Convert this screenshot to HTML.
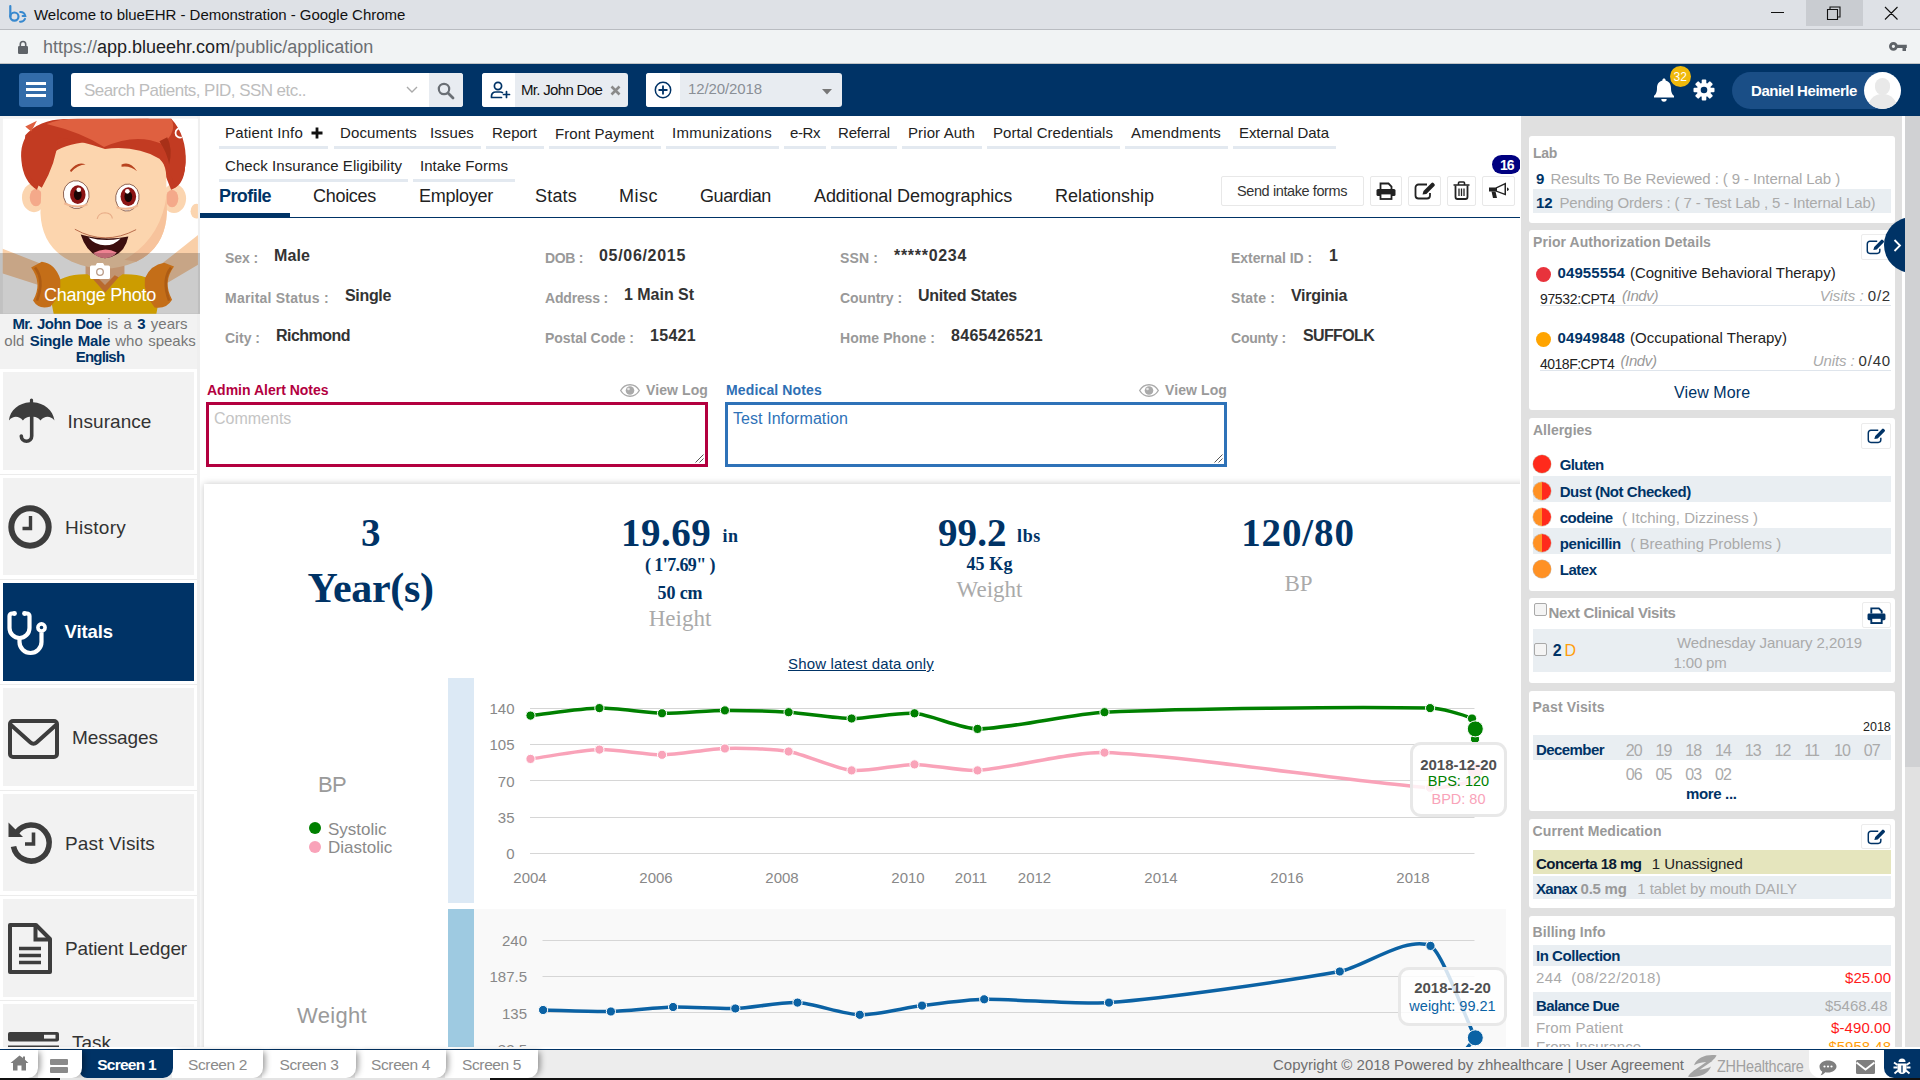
<!DOCTYPE html>
<html lang="en">
<head>
<meta charset="utf-8">
<title>Welcome to blueEHR - Demonstration</title>
<style>
*{box-sizing:border-box;margin:0;padding:0}
html,body{width:1920px;height:1080px;overflow:hidden;background:#fff}
body{font-family:"Liberation Sans",Arial,sans-serif;font-size:15px;color:#222;position:relative}
.a{position:absolute}
.t{position:absolute;white-space:nowrap;line-height:1}
.b{font-weight:700}
.nv{color:#003366}
.g{color:#999}
.lg{color:#aaa}
.sf{font-family:"Liberation Serif","DejaVu Serif",serif}
svg{position:absolute;overflow:visible}
/* chrome */
#titlebar{left:0;top:0;width:1920px;height:30px;background:#dee1e6;border-bottom:1px solid #b9bcc1}
#urlbar{left:0;top:30px;width:1920px;height:34px;background:#f1f3f4;border-bottom:1px solid #c2c4c6}
#nav{left:0;top:64px;width:1920px;height:52px;background:#003366}
.box{position:absolute;top:9px;height:34px;border-radius:3px;background:#fff;overflow:hidden}
/* sidebar */
#side{left:0;top:116px;width:200px;height:934px;background:#fff;overflow:hidden}
.tile{position:absolute;left:3px;width:191px;height:97.700px;background:#f2f2f2}
.tile .t{font-size:19px;color:#333}
.tsep{position:absolute;left:0;width:197px;height:1px;background:#ececec}
/* main */
#main{left:200px;top:116px;width:1321px;height:934px;background:#fff;overflow:hidden}
.mi{position:absolute;height:3px;background:#e3e9f0}
.fl{font-size:14px;font-weight:700;color:#999}
.fv{font-size:16px;font-weight:700;color:#333}
.ib{position:absolute;top:61px;height:30px;border:1px solid #e8e8e8;border-radius:2px;background:#fff}
/* right */
#right{left:1520px;top:116px;width:385px;height:934px;background:#e0e0e0;overflow:hidden}
.card{position:absolute;left:9px;width:366px;background:#fff;border-radius:3px}
.ct{position:absolute;left:4px;font-size:14px;font-weight:700;color:#999;white-space:nowrap;line-height:1}
.row{position:absolute;left:4px;width:358px;background:#e9eef2}
.eb{position:absolute;left:332px;width:30px;height:26px;border:1px solid #ececec;background:#fff;border-radius:2px}
#right .t{margin-top:-1px}
/* footer */
#foot{left:0;top:1049px;width:1920px;height:29px;background:#ededed;border-top:1px solid #003366}
.tab{position:absolute;top:0;height:28px;background:#fff;border-radius:0 0 10px 0;font-size:15.500px;color:#8a8a8a;line-height:29.500px;text-align:center;box-shadow:4px 0 6px -2px rgba(0,0,0,.42)}
</style>
</head>
<body>
<!-- ===== browser chrome ===== -->
<div id="titlebar" class="a">
  <svg style="left:0;top:0" width="30" height="30" viewBox="0 0 30 30"><g fill="none" stroke="#3789cf" stroke-width="2.200" stroke-linecap="round"><path d="M10.300 6v10.600"/><circle cx="14.400" cy="16.600" r="4.100"/><path d="M20.200 12A5 5 0 0 1 25.300 15.900H22.600M25 18.900A5 5 0 0 1 20 21.700" stroke-width="2"/></g></svg>
  <span class="t" style="left:34px;top:7px;font-size:15px;color:#111;letter-spacing:-.04px">Welcome to blueEHR - Demonstration - Google Chrome</span>
  <div class="a" style="left:1806px;top:0;width:57px;height:26px;background:#c9ccd1"></div>
  <svg style="left:1770px;top:0" width="140" height="30" viewBox="0 0 140 30"><path d="M1 12.500h13M57.500 9.500h10v10h-10zM60 9.500v-2.500h10v10h-2.500M115 7l12.500 12.500M127.500 7l-12.500 12.500" fill="none" stroke="#111" stroke-width="1.100"/></svg>
</div>
<div id="urlbar" class="a">
  <svg style="left:17px;top:10px" width="12" height="15" viewBox="0 0 12 15"><rect x="1" y="6" width="10" height="8" rx="1.200" fill="#5f6368"/><path d="M3.300 6V4.200a2.700 2.700 0 0 1 5.400 0V6" fill="none" stroke="#5f6368" stroke-width="1.600"/></svg>
  <span class="t" style="left:43px;top:8px;font-size:18px;color:#6b6f73">https://<span style="color:#202124">app.blueehr.com</span>/public/application</span>
  <svg style="left:1888px;top:10px" width="20" height="12" viewBox="0 0 20 12"><circle cx="5.400" cy="6.300" r="3" fill="none" stroke="#5f6368" stroke-width="2.800"/><path d="M9 4.800h9.800v3.200h-9.800zM14.500 8h3.500v3h-3.500z" fill="#5f6368"/></svg>
</div>
<!-- ===== app nav bar ===== -->
<div id="nav" class="a">
  <div class="box" style="left:19px;width:34px;background:#336ca9">
    <div class="a" style="left:7px;top:9px;width:20px;height:3px;background:#fff"></div>
    <div class="a" style="left:7px;top:15px;width:20px;height:3px;background:#fff"></div>
    <div class="a" style="left:7px;top:21px;width:20px;height:3px;background:#fff"></div>
  </div>
  <div class="box" style="left:71px;width:392px">
    <span class="t" style="left:13px;top:9px;font-size:17px;color:#bdbdbd;letter-spacing:-.55px">Search Patients, PID, SSN etc..</span>
    <svg style="left:335px;top:13px" width="12" height="8" viewBox="0 0 12 8"><path d="M1 1l5 5 5-5" fill="none" stroke="#aaa" stroke-width="1.400"/></svg>
    <div class="a" style="left:358px;top:0;width:34px;height:34px;background:#e8ecf1"></div>
    <svg style="left:366px;top:9px" width="18" height="18" viewBox="0 0 18 18"><circle cx="7" cy="7" r="5.200" fill="none" stroke="#6a6f75" stroke-width="2.200"/><path d="M11 11l5 5" stroke="#6a6f75" stroke-width="2.800" stroke-linecap="round"/></svg>
  </div>
  <div class="box" style="left:482px;width:146px;background:#e8ecf1">
    <div class="a" style="left:0;top:0;width:33px;height:34px;background:#fff"></div>
    <svg style="left:8px;top:8px" width="21" height="18" viewBox="0 0 21 18"><circle cx="8" cy="5" r="3.600" fill="none" stroke="#003366" stroke-width="1.700"/><path d="M1.500 16.500v-1.500a4 4 0 0 1 4-4h5a4 4 0 0 1 2 .6M1.500 16.500h10" fill="none" stroke="#003366" stroke-width="1.700" stroke-linecap="round"/><path d="M16.500 10.500v6M13.500 13.500h6" stroke="#003366" stroke-width="1.700" stroke-linecap="round"/></svg>
    <span class="t" style="left:39px;top:9px;font-size:15px;color:#111;letter-spacing:-.68px">Mr. John Doe</span>
    <svg style="left:128px;top:12px" width="11" height="11" viewBox="0 0 11 11"><path d="M1.500 1.500l8 8M9.500 1.500l-8 8" stroke="#8a8a8a" stroke-width="2.600"/></svg>
  </div>
  <div class="box" style="left:646px;width:196px;background:#e8ecf1">
    <div class="a" style="left:0;top:0;width:34px;height:34px;background:#fff"></div>
    <svg style="left:8px;top:8px" width="18" height="18" viewBox="0 0 18 18"><circle cx="9" cy="9" r="7.700" fill="none" stroke="#003366" stroke-width="1.500"/><path d="M9 4.500v9M4.500 9h9" stroke="#003366" stroke-width="1.800"/></svg>
    <span class="t" style="left:42px;top:8px;font-size:15px;color:#8a8f96;letter-spacing:-.1px">12/20/2018</span>
    <svg style="left:176px;top:16px" width="10" height="6" viewBox="0 0 10 6"><path d="M0 0h10l-5 5.500z" fill="#777"/></svg>
  </div>
  <!-- right side -->
  <svg style="left:1653px;top:13px" width="22" height="26" viewBox="0 0 22 26"><path d="M11 1.500c.9 0 1.600.7 1.600 1.600v.5c3.300.8 5.400 3.600 5.400 7.400 0 4.500 1.300 6.300 3 8v1.500H1V19c1.700-1.700 3-3.500 3-8 0-3.800 2.100-6.600 5.400-7.400v-.5c0-.9.700-1.600 1.600-1.600zM8.300 22h5.400a2.700 2.700 0 0 1-5.400 0z" fill="#fff"/></svg>
  <div class="a" style="left:1670px;top:2px;width:21px;height:21px;border-radius:11px;background:#f0b90b"></div>
  <span class="t" style="left:1673.500px;top:7px;font-size:12px;color:#fff">32</span>
  <svg style="left:1693px;top:15px" width="22" height="22" viewBox="-11 -11 22 22"><g fill="#fff"><circle r="7.200"/><g id="gt"><rect x="-2.300" y="-10.500" width="4.600" height="21" rx="1"/></g><use href="#gt" transform="rotate(45)"/><use href="#gt" transform="rotate(90)"/><use href="#gt" transform="rotate(135)"/></g><circle r="3.300" fill="#003366"/></svg>
  <div class="a" style="left:1732px;top:8px;width:169px;height:37px;border-radius:19px;background:#1a4e86"></div>
  <span class="t b" style="left:1751px;top:19px;font-size:15px;color:#fff;letter-spacing:-.44px">Daniel Heimerle</span>
  <div class="a" style="left:1864px;top:8px;width:37px;height:37px;border-radius:19px;background:#fff;overflow:hidden">
    <div class="a" style="left:11px;top:6px;width:15px;height:17px;border-radius:8px;background:#e9e9e9"></div>
    <div class="a" style="left:4px;top:22px;width:29px;height:24px;border-radius:14px 14px 0 0;background:#e9e9e9"></div>
  </div>
</div>
<!-- ===== left sidebar ===== -->
<div id="side" class="a">
  <div class="a" style="left:0;top:0;width:200px;height:252.700px;background:#f2f2f2"></div>
  <div class="a" style="left:197px;top:0;width:3px;height:934px;background:#efefef"></div>
  <!-- patient photo (cartoon boy) -->
  <svg style="left:0;top:-4px" width="210" height="210" viewBox="0 0 1080 1080">
    <defs><clipPath id="pc"><rect x="14" y="33" width="1004" height="1004"/></clipPath></defs>
    <g clip-path="url(#pc)">
      <rect x="14" y="33" width="1004" height="1004" fill="#fff"/>
      <!-- arms -->
      <path d="M-20 690 L260 800 L230 900 L-20 820z" fill="#f9cfa8"/>
      <path d="M1060 600 L1060 760 L860 880 L820 790z" fill="#f9cfa8"/>
      <ellipse cx="1010" cy="510" rx="30" ry="38" fill="#fbd5b0"/>
      <!-- neck & shirt -->
      <rect x="440" y="730" width="200" height="160" fill="#f2b98e"/>
      <path d="M250 900 Q330 830 450 835 L540 900 L630 835 Q760 830 830 900 L800 1060 L280 1060z" fill="#ffc400"/>
      <path d="M470 850 L540 930 L610 850 L590 840 L540 890 L490 840z" fill="#e8853a"/>
      <!-- cuffs -->
      <path d="M215 770 q70 10 95 90 q10 80 -50 140 q-60 20 -90 -30 q50 -90 -10 -170z" fill="#f58a1f"/>
      <path d="M845 775 q-70 10 -100 80 q-10 80 50 150 q60 10 90 -40 q-50 -90 10 -170z" fill="#f58a1f"/>
      <path d="M180 800 q50 60 10 170" stroke="#d9731a" stroke-width="14" fill="none"/>
      <path d="M880 800 q-50 60 -10 170" stroke="#d9731a" stroke-width="14" fill="none"/>
      <!-- ears -->
      <ellipse cx="175" cy="440" rx="62" ry="75" fill="#fbd5b0"/><ellipse cx="185" cy="440" rx="32" ry="45" fill="#f4a98a"/>
      <ellipse cx="895" cy="445" rx="62" ry="75" fill="#fbd5b0"/><ellipse cx="885" cy="445" rx="32" ry="45" fill="#f4a98a"/>
      <!-- hair back -->
      <path d="M110 250 Q90 60 330 40 L760 33 Q980 80 950 300 Q940 380 880 400 L840 300 L230 300 L190 400 Q120 360 110 250z" fill="#c23b22"/>
      <!-- face -->
      <path d="M215 330 Q215 150 535 150 Q850 150 855 330 L858 520 Q850 700 700 770 Q535 840 370 770 Q215 700 208 520z" fill="#fcd5ae"/>
      <path d="M700 770 Q850 700 858 520 L858 420 Q830 650 640 760z" fill="#f7c39c"/>
      <!-- hair front -->
      <path d="M130 120 Q200 40 330 36 L880 33 Q960 120 955 260 Q950 350 900 390 Q880 300 820 240 Q700 170 540 190 Q420 150 300 130 Q290 260 215 390 Q100 330 130 120z" fill="#c23b22"/>
      <path d="M240 62 Q300 35 400 33 L880 33 Q915 100 835 165 Q700 105 535 180 Q420 105 240 62z" fill="#df6040"/>
      <path d="M130 75 L190 45 L160 100z" fill="#df6040"/>
      <path d="M820 150 q40 60 50 120 q20 -80 -10 -140z" fill="#a83018"/>
      <!-- brows -->
      <path d="M360 300 Q400 250 440 270 Q400 270 365 310z" fill="#b8431f"/>
      <path d="M625 270 Q670 250 705 305 Q670 275 625 282z" fill="#b8431f"/>
      <!-- eyes -->
      <ellipse cx="392" cy="425" rx="66" ry="72" fill="#fff" stroke="#7a4a3a" stroke-width="4" transform="rotate(-12 392 425)"/>
      <ellipse cx="655" cy="440" rx="60" ry="70" fill="#fff" stroke="#7a4a3a" stroke-width="4" transform="rotate(10 655 440)"/>
      <ellipse cx="400" cy="425" rx="40" ry="48" fill="#8c1515"/><ellipse cx="400" cy="425" rx="20" ry="28" fill="#1a0505"/><circle cx="405" cy="400" r="12" fill="#fff"/>
      <ellipse cx="660" cy="435" rx="40" ry="48" fill="#8c1515"/><ellipse cx="660" cy="435" rx="20" ry="28" fill="#1a0505"/><circle cx="655" cy="408" r="12" fill="#fff"/>
      <path d="M330 470 Q400 500 450 475" stroke="#f1b893" stroke-width="10" fill="none"/>
      <path d="M600 490 Q660 510 710 480" stroke="#f1b893" stroke-width="10" fill="none"/>
      <!-- nose, mouth -->
      <path d="M500 550 Q505 520 540 518 Q575 520 578 548" stroke="#e8ad88" stroke-width="6" fill="none"/>
      <path d="M385 603 Q540 690 700 605" stroke="#b86a4a" stroke-width="5" fill="none"/>
      <path d="M415 630 Q540 665 660 640 Q640 740 540 752 Q450 740 415 630z" fill="#3c0f0f"/>
      <path d="M455 645 Q540 668 620 650 Q590 685 540 685 Q490 685 455 645z" fill="#fff"/>
      <path d="M480 725 Q540 690 600 722 Q580 750 540 752 Q500 750 480 725z" fill="#ee8292"/>
      <!-- top-right partial icon -->
      <path d="M935 85 a24 24 0 1 0 0 45" stroke="#fff" stroke-width="9" fill="none"/>
    </g>
  </svg>
  <div class="a" style="left:0;top:137px;width:200px;height:61px;background:rgba(0,0,0,.2)"></div>
  <svg style="left:89px;top:146px" width="22" height="18" viewBox="0 0 22 18"><path d="M2.500 3.500h4l1.500-2.500h6l1.500 2.500h4a1.500 1.500 0 0 1 1.500 1.500v10.500a1.500 1.500 0 0 1-1.500 1.500h-17a1.500 1.500 0 0 1-1.500-1.500v-10.500a1.500 1.500 0 0 1 1.500-1.500z" fill="#fff"/><circle cx="11" cy="10" r="3.300" fill="none" stroke="#b89a86" stroke-width="1.300"/></svg>
  <span class="t" style="left:44px;top:170px;font-size:18px;color:#fff;letter-spacing:-.26px">Change Photo</span>
  <!-- patient summary -->
  <div class="a" style="left:0;top:200px;width:200px;text-align:center;font-size:15px;line-height:16.500px;color:#777;white-space:nowrap;word-spacing:1.2px">
    <div><span class="b nv" style="letter-spacing:-.6px">Mr. John Doe</span> is a <span class="b nv">3</span> years</div>
    <div>old <span class="b nv" style="letter-spacing:-.32px">Single Male</span> who speaks</div>
    <div><span class="b nv" style="letter-spacing:-.8px">English</span></div>
  </div>
  <!-- tiles -->
  <div class="a" style="left:0;top:252.700px;width:197px;height:690px;background:#fff"></div>
  <div class="tile" style="top:256px">
    <svg style="left:5px;top:26px" width="47" height="45" viewBox="0 0 47 45"><path d="M23.500 0.500a1.600 1.600 0 0 1 1.600 1.600v2.100C36 5 45 12 46.500 22.500c-2-2.600-4.500-3.800-7-3.800s-5 1.200-7 3.800c-2-2.600-4.500-3.800-7-3.800V38a7 7 0 0 1-14 0 1.800 1.800 0 0 1 3.600 0 3.400 3.400 0 0 0 6.800 0V18.700c-2.500 0-5 1.200-7 3.800-2-2.600-4.500-3.800-7-3.800s-5 1.200-7 3.800C2 12 11 5 21.900 4.200V2.100A1.600 1.600 0 0 1 23.500 0.500z" fill="#3d3d3d"/></svg>
    <span class="t" style="left:64.500px;top:39.500px;letter-spacing:.06px">Insurance</span>
  </div>
  <div class="tsep" style="top:357.500px"></div>
  <div class="tile" style="top:361.500px">
    <svg style="left:5px;top:27.500px" width="44" height="44" viewBox="0 0 44 44"><circle cx="22" cy="22" r="18.700" fill="none" stroke="#3d3d3d" stroke-width="6"/><path d="M22.500 11v12.500h-8" fill="none" stroke="#3d3d3d" stroke-width="3.400"/></svg>
    <span class="t" style="left:62px;top:40px;letter-spacing:.27px">History</span>
  </div>
  <div class="tsep" style="top:463px"></div>
  <div class="tile" style="top:467px;background:#003366">
    <svg style="left:4px;top:27px" width="42" height="45" viewBox="0 0 42 45"><path d="M7 3.500H5a2.500 2.500 0 0 0-2.500 2.500v12a10 10 0 0 0 20 0V6a2.500 2.500 0 0 0-2.500-2.500h-2" fill="none" stroke="#fff" stroke-width="4.200" stroke-linecap="round"/><path d="M12.500 28v4a11 11 0 0 0 22 0v-9.500" fill="none" stroke="#fff" stroke-width="4.200"/><circle cx="34.500" cy="17.500" r="3.600" fill="none" stroke="#fff" stroke-width="3.600"/><circle cx="7.500" cy="3.500" r="2.400" fill="#fff"/><circle cx="17.500" cy="3.500" r="2.400" fill="#fff"/></svg>
    <span class="t b" style="left:61.500px;top:40px;font-size:18.500px;color:#fff;letter-spacing:-.1px">Vitals</span>
  </div>
  <div class="tsep" style="top:568px"></div>
  <div class="tile" style="top:572px">
    <svg style="left:5px;top:30.500px" width="51" height="40" viewBox="0 0 51 40"><rect x="2" y="2" width="47" height="36" rx="3" fill="none" stroke="#3d3d3d" stroke-width="4"/><path d="M3 6l19.500 17.500a4.500 4.500 0 0 0 6 0L48 6" fill="none" stroke="#3d3d3d" stroke-width="4"/></svg>
    <span class="t" style="left:69px;top:40px;letter-spacing:-.08px">Messages</span>
  </div>
  <div class="tsep" style="top:673.500px"></div>
  <div class="tile" style="top:677.500px">
    <svg style="left:5px;top:26.500px" width="44" height="45" viewBox="0 0 44 45"><path d="M8.500 12.500a18 18 0 1 1-3 14" fill="none" stroke="#3d3d3d" stroke-width="5.600"/><path d="M0.500 2.500v14.500h14.500z" fill="#3d3d3d"/><path d="M25.500 12.500v11.500h-8.500" fill="none" stroke="#3d3d3d" stroke-width="3.600"/></svg>
    <span class="t" style="left:62px;top:40px;letter-spacing:.15px">Past Visits</span>
  </div>
  <div class="tsep" style="top:779px"></div>
  <div class="tile" style="top:783px">
    <svg style="left:5px;top:24px" width="44" height="51" viewBox="0 0 44 51"><path d="M2 2h26l14 14v33H2z" fill="none" stroke="#3d3d3d" stroke-width="4" stroke-linejoin="round"/><path d="M27.500 2.500v14h14" fill="none" stroke="#3d3d3d" stroke-width="4"/><path d="M11 25.500h22M11 32.500h22M11 39.500h22" stroke="#3d3d3d" stroke-width="3.600"/></svg>
    <span class="t" style="left:62px;top:40px;letter-spacing:-.11px">Patient Ledger</span>
  </div>
  <div class="tsep" style="top:884px"></div>
  <div class="tile" style="top:888px">
    <svg style="left:5px;top:28px" width="51" height="30" viewBox="0 0 51 30"><rect x="0" y="0" width="51" height="9.500" rx="2" fill="#3d3d3d"/><rect x="36" y="2.800" width="11.500" height="3.800" fill="#f2f2f2"/><rect x="0" y="13.500" width="51" height="3" fill="#3d3d3d"/></svg>
    <span class="t" style="left:69px;top:28.500px">Task</span>
  </div>
</div>
<!--SIDE-->
<!-- ===== main column ===== -->
<div id="main" class="a">
  <span class="t" style="left:25px;top:8.5px;letter-spacing:0.17px">Patient Info</span><div class="mi" style="left:19px;top:30px;width:109px"></div>
  <span class="t" style="left:140px;top:8.5px;letter-spacing:0.12px">Documents</span><div class="mi" style="left:134px;top:30px;width:90px"></div>
  <span class="t" style="left:230px;top:8.5px;letter-spacing:0.10px">Issues</span><div class="mi" style="left:224px;top:30px;width:57px"></div>
  <span class="t" style="left:292px;top:8.5px;letter-spacing:0.00px">Report</span><div class="mi" style="left:286px;top:30px;width:58px"></div>
  <span class="t" style="left:355px;top:9.5px;letter-spacing:0.05px">Front Payment</span><div class="mi" style="left:349px;top:30px;width:112px"></div>
  <span class="t" style="left:472px;top:8.5px;letter-spacing:0.25px">Immunizations</span><div class="mi" style="left:466px;top:30px;width:113px"></div>
  <span class="t" style="left:590px;top:8.5px;letter-spacing:-0.42px">e-Rx</span><div class="mi" style="left:584px;top:30px;width:42px"></div>
  <span class="t" style="left:638px;top:8.5px;letter-spacing:-0.17px">Referral</span><div class="mi" style="left:631px;top:30px;width:66px"></div>
  <span class="t" style="left:708px;top:8.5px;letter-spacing:0.11px">Prior Auth</span><div class="mi" style="left:702px;top:30px;width:80px"></div>
  <span class="t" style="left:793px;top:8.5px;letter-spacing:0.04px">Portal Credentials</span><div class="mi" style="left:787px;top:30px;width:133px"></div>
  <span class="t" style="left:931px;top:8.5px;letter-spacing:0.16px">Amendments</span><div class="mi" style="left:925px;top:30px;width:103px"></div>
  <span class="t" style="left:1039px;top:8.5px;letter-spacing:-0.07px">External Data</span><div class="mi" style="left:1033px;top:30px;width:103px"></div>
  <svg style="left:111px;top:11px" width="12" height="12" viewBox="0 0 12 12"><path d="M6 0.500v11M0.500 6h11" stroke="#111" stroke-width="2.800"/></svg>
  <span class="t" style="left:25px;top:42px;letter-spacing:0.07px">Check Insurance Eligibility</span><div class="mi" style="left:19px;top:63px;width:189px"></div>
  <span class="t" style="left:220px;top:42px;letter-spacing:0.04px">Intake Forms</span><div class="mi" style="left:213px;top:63px;width:102px"></div>
  <span class="t b nv" style="left:19px;top:71px;font-size:18px;letter-spacing:-0.57px">Profile</span>
  <span class="t" style="left:113px;top:71px;font-size:18px;letter-spacing:-0.29px">Choices</span>
  <span class="t" style="left:219px;top:71px;font-size:18px;letter-spacing:-0.25px">Employer</span>
  <span class="t" style="left:335px;top:71px;font-size:18px;letter-spacing:0.20px">Stats</span>
  <span class="t" style="left:419px;top:71px;font-size:18px;letter-spacing:0.50px">Misc</span>
  <span class="t" style="left:500px;top:71px;font-size:18px;letter-spacing:-0.39px">Guardian</span>
  <span class="t" style="left:614px;top:71px;font-size:18px;letter-spacing:-0.09px">Additional Demographics</span>
  <span class="t" style="left:855px;top:71px;font-size:18px;letter-spacing:-0.01px">Relationship</span>
  <div class="a" style="left:0;top:97px;width:90px;height:5px;background:#003366"></div>
  <div class="a" style="left:0;top:100.500px;width:1321px;height:1.500px;background:#003366"></div>
  <div class="ib" style="left:1021px;top:60px;width:143px;height:30px"></div>
  <span class="t" style="left:1037px;top:68px;font-size:14.500px;color:#333;letter-spacing:-.4px">Send intake forms</span>
  <div class="ib" style="left:1170px;top:60px;width:32px;height:30px"></div>
  <div class="ib" style="left:1208px;top:60px;width:33px;height:30px"></div>
  <div class="ib" style="left:1247px;top:60px;width:29px;height:30px"></div>
  <div class="ib" style="left:1282px;top:60px;width:33px;height:30px"></div>
  <svg style="left:1176px;top:66px" width="20" height="18" viewBox="0 0 20 18"><path d="M4.500 7V1.500h8l3 3V7" fill="none" stroke="#222" stroke-width="1.800"/><rect x="0.500" y="7" width="19" height="7" rx="1.500" fill="#222"/><rect x="4.500" y="11.500" width="11" height="5.500" fill="#fff" stroke="#222" stroke-width="1.800"/></svg>
  <svg style="left:1214px;top:65px" width="22" height="19" viewBox="0 0 22 19"><path d="M13 3.500H4.500a3 3 0 0 0-3 3v8a3 3 0 0 0 3 3h8.500a3 3 0 0 0 3-3V12" fill="none" stroke="#222" stroke-width="1.800"/><path d="M8.500 13.500l1-3.500 8-8a1.400 1.400 0 0 1 2 0l.9.900a1.400 1.400 0 0 1 0 2l-8 8z" fill="#222"/></svg>
  <svg style="left:1253px;top:65px" width="17" height="19" viewBox="0 0 17 19"><path d="M0.500 4h16M5.500 4V2a1 1 0 0 1 1-1h4a1 1 0 0 1 1 1v2" fill="none" stroke="#222" stroke-width="1.600"/><path d="M2.500 4.500v11.500a2 2 0 0 0 2 2h8a2 2 0 0 0 2-2V4.500" fill="none" stroke="#222" stroke-width="1.800"/><path d="M6 7.500v7.500M8.500 7.500v7.500M11 7.500v7.500" stroke="#222" stroke-width="1.300"/></svg>
  <svg style="left:1288px;top:65px" width="22" height="19" viewBox="0 0 22 19"><path d="M1 6.500h6.500L18 1.500v13L7.500 10.500H1z" fill="#222"/><path d="M16.500 3.800L9 7.300v2.400l7.500 2.800z" fill="#fff"/><path d="M3.500 10.500h4l1.500 6.500h-4z" fill="#222"/><path d="M19 6.500a1.700 1.700 0 0 1 0 3.400" fill="#222"/></svg>
  <div class="a" style="left:1292px;top:39px;width:29px;height:19px;border-radius:10px;background:#000080"></div>
  <span class="t b" style="left:1300px;top:41.500px;font-size:14px;color:#fff;letter-spacing:-1px">16</span>
  <span class="t fl" style="left:25px;top:135px;letter-spacing:-0.10px">Sex :</span><span class="t fv" style="left:74px;top:131.5px;letter-spacing:0.10px">Male</span>
  <span class="t fl" style="left:345px;top:135px;letter-spacing:-0.34px">DOB :</span><span class="t fv" style="left:399px;top:131.5px;letter-spacing:0.69px">05/06/2015</span>
  <span class="t fl" style="left:640px;top:135px;letter-spacing:0.14px">SSN :</span><span class="t fv" style="left:694px;top:131.5px;letter-spacing:0.70px">*****0234</span>
  <span class="t fl" style="left:1031px;top:135px;letter-spacing:-0.05px">External ID :</span><span class="t fv" style="left:1129px;top:131.5px;letter-spacing:-0.90px">1</span>
  <span class="t fl" style="left:25px;top:175px;letter-spacing:0.22px">Marital Status :</span><span class="t fv" style="left:145px;top:171.5px;letter-spacing:-0.33px">Single</span>
  <span class="t fl" style="left:345px;top:175px;letter-spacing:-0.18px">Address :</span><span class="t fv" style="left:424px;top:170.5px;letter-spacing:-0.02px">1 Main St</span>
  <span class="t fl" style="left:640px;top:175px;letter-spacing:-0.02px">Country :</span><span class="t fv" style="left:718px;top:171.5px;letter-spacing:-0.25px">United States</span>
  <span class="t fl" style="left:1031px;top:175px;letter-spacing:0.17px">State :</span><span class="t fv" style="left:1091px;top:171.5px;letter-spacing:-0.30px">Virginia</span>
  <span class="t fl" style="left:25px;top:215px;letter-spacing:0.00px">City :</span><span class="t fv" style="left:76px;top:211.5px;letter-spacing:-0.53px">Richmond</span>
  <span class="t fl" style="left:345px;top:215px;letter-spacing:-0.04px">Postal Code :</span><span class="t fv" style="left:450px;top:211.5px;letter-spacing:0.30px">15421</span>
  <span class="t fl" style="left:640px;top:215px;letter-spacing:0.08px">Home Phone :</span><span class="t fv" style="left:751px;top:211.5px;letter-spacing:0.30px">8465426521</span>
  <span class="t fl" style="left:1031px;top:215px;letter-spacing:-0.22px">County :</span><span class="t fv" style="left:1103px;top:211.5px;letter-spacing:-0.64px">SUFFOLK</span>
  <span class="t b" style="left:7px;top:267px;font-size:14px;color:#b3003f">Admin Alert Notes</span>
  <svg style="left:420px;top:268px" width="20" height="13" viewBox="0 0 20 13"><path d="M0.700 6.500C3 2.500 6.500 0.800 10 0.800s7 1.700 9.300 5.700C17 10.500 13.500 12.200 10 12.200S3 10.500 0.700 6.500z" fill="none" stroke="#aaa" stroke-width="1.400"/><circle cx="10" cy="6.500" r="4.300" fill="#aaa"/><circle cx="8.500" cy="5" r="1.300" fill="#e6e6e6"/></svg><span class="t b" style="left:446px;top:267px;font-size:14px;color:#9a9a9a;letter-spacing:.1px">View Log</span>
  <div class="a" style="left:6px;top:286px;width:502px;height:65px;border:3px solid #b3003f;background:#fff"></div>
  <span class="t" style="left:14px;top:295px;font-size:16px;color:#c4c4c4">Comments</span>
  <svg style="left:495px;top:338px" width="9" height="9" viewBox="0 0 9 9"><path d="M0.500 8.500l8-8M4.500 8.500l4-4" stroke="#555" stroke-width="1"/></svg>
  <span class="t b" style="left:526px;top:267px;font-size:14px;color:#2e6fb4;letter-spacing:.14px">Medical Notes</span>
  <svg style="left:939px;top:268px" width="20" height="13" viewBox="0 0 20 13"><path d="M0.700 6.500C3 2.500 6.500 0.800 10 0.800s7 1.700 9.300 5.700C17 10.500 13.500 12.200 10 12.200S3 10.500 0.700 6.500z" fill="none" stroke="#aaa" stroke-width="1.400"/><circle cx="10" cy="6.500" r="4.300" fill="#aaa"/><circle cx="8.500" cy="5" r="1.300" fill="#e6e6e6"/></svg><span class="t b" style="left:965px;top:267px;font-size:14px;color:#9a9a9a;letter-spacing:.1px">View Log</span>
  <div class="a" style="left:525px;top:286px;width:502px;height:65px;border:3px solid #2e72b8;background:#fff"></div>
  <span class="t" style="left:533px;top:295px;font-size:16px;color:#2e72b8;letter-spacing:.07px">Test Information</span>
  <svg style="left:1014px;top:338px" width="9" height="9" viewBox="0 0 9 9"><path d="M0.500 8.500l8-8M4.500 8.500l4-4" stroke="#555" stroke-width="1"/></svg>
  <!-- vitals card -->
  <div class="a" style="left:4px;top:368px;width:1330px;height:600px;background:#fff;box-shadow:0 0 7px rgba(0,0,0,.22)"></div>
  <span class="t sf b nv" style="left:-129.3px;width:600px;text-align:center;top:397px;font-size:39px;letter-spacing:0px">3</span>
  <span class="t sf b nv" style="left:-129.3px;width:600px;text-align:center;top:451px;font-size:42px;letter-spacing:-0.3px">Year(s)</span>
  <span class="t sf b nv" style="left:421px;top:397px;font-size:39px;letter-spacing:.5px">19.69</span><span class="t sf b nv" style="left:522.5px;top:411px;font-size:18px;letter-spacing:.5px">in</span>
  <span class="t sf b nv" style="left:180px;width:600px;text-align:center;top:440px;font-size:18px;letter-spacing:-0.59px">( 1'7.69" )</span>
  <span class="t sf b nv" style="left:180px;width:600px;text-align:center;top:468px;font-size:18px;letter-spacing:-0.1px">50 cm</span>
  <span class="t sf lg" style="left:180px;width:600px;text-align:center;top:491px;font-size:23px;letter-spacing:0px">Height</span>
  <span class="t sf b nv" style="left:738px;top:397px;font-size:39px;letter-spacing:.1px">99.2</span><span class="t sf b nv" style="left:817px;top:411px;font-size:18px;letter-spacing:.66px">lbs</span>
  <span class="t sf b nv" style="left:489.5px;width:600px;text-align:center;top:439px;font-size:18px;letter-spacing:0.1px">45 Kg</span>
  <span class="t sf lg" style="left:489.5px;width:600px;text-align:center;top:462px;font-size:23px;letter-spacing:0px">Weight</span>
  <span class="t sf b nv" style="left:798px;width:600px;text-align:center;top:397px;font-size:39px;letter-spacing:0.9px">120/80</span>
  <span class="t sf lg" style="left:798.5px;width:600px;text-align:center;top:456px;font-size:23px;letter-spacing:0px">BP</span>
  <span class="t nv" style="left:588px;top:540px;font-size:15px;letter-spacing:.16px;text-decoration:underline">Show latest data only</span>
  <span class="t" style="left:118px;top:658px;font-size:22px;color:#9a9a9a;letter-spacing:-.6px">BP</span>
  <div class="a" style="left:109px;top:706px;width:12px;height:12px;border-radius:6px;background:#008000"></div><span class="t" style="left:128px;top:705px;font-size:17px;color:#8a8a8a">Systolic</span>
  <div class="a" style="left:109px;top:725px;width:12px;height:12px;border-radius:6px;background:#f9a3b9"></div><span class="t" style="left:128px;top:722.5px;font-size:17px;color:#8a8a8a">Diastolic</span>
  <span class="t" style="left:97px;top:889px;font-size:22px;color:#9a9a9a;letter-spacing:.3px">Weight</span>
  <div class="a" style="left:248px;top:562px;width:26px;height:225px;background:#dce9f5"></div>
  <div class="a" style="left:248px;top:793px;width:26px;height:140px;background:#9ecae1"></div>
  <div class="a" style="left:274px;top:793px;width:1032px;height:140px;background:#f9f9f9"></div>
  <svg style="left:0;top:0" width="1320" height="934" viewBox="200 116 1320 934" font-family="Liberation Sans, Arial, sans-serif"><g stroke="#d6d6d6" stroke-width="1" fill="none"><path d="M530 708.5H1474.500"/><path d="M530 744.5H1474.500"/><path d="M530 780.5H1474.500"/><path d="M530 817.5H1474.500"/><path d="M530 853.5H1474.500"/><path d="M542.500 940.5H1474.500"/><path d="M542.500 976.5H1474.500"/><path d="M542.500 1012.5H1474.500"/><path d="M542.500 1048.5H1474.500"/></g><g font-size="15" fill="#888" text-anchor="end"><text x="514.500" y="714">140</text><text x="514.500" y="750">105</text><text x="514.500" y="786.5">70</text><text x="514.500" y="823">35</text><text x="514.500" y="859">0</text><text x="527" y="946">240</text><text x="527" y="982">187.5</text><text x="527" y="1018.5">135</text><text x="527" y="1054.500">82.5</text></g><g font-size="15" fill="#888" text-anchor="middle"><text x="530" y="882.500">2004</text><text x="656" y="882.500">2006</text><text x="782" y="882.500">2008</text><text x="908" y="882.500">2010</text><text x="971" y="882.500">2011</text><text x="1034.5" y="882.500">2012</text><text x="1161" y="882.500">2014</text><text x="1287" y="882.500">2016</text><text x="1413" y="882.500">2018</text></g><g transform="translate(.5 0)"><path d="M530.0,758.9C547.2,756.6,581.7,750.1,598.9,749.6C614.5,749.1,645.9,754.9,661.5,754.8C677.2,754.7,708.7,748.9,724.4,748.5C740.3,748.1,772.2,748.7,788.1,751.5C803.9,754.2,835.4,768.8,851.1,770.4C866.8,772.0,898.3,764.4,914.0,764.4C929.8,764.4,961.2,771.4,977.0,770.4C1008.8,768.4,1072.2,751.4,1104.0,752.6C1185.4,755.7,1348.2,781.6,1429.6,787.8C1440.1,788.6,1461.0,784.7,1471.5,780.7C1472.3,780.4,1474.0,773.0,1474.8,770.4" fill="none" stroke="#f9a3b9" stroke-width="3.500"/><path d="M530.0,715.6C547.2,713.7,581.7,708.4,598.9,708.1C614.5,707.8,645.9,713.0,661.5,713.3C677.2,713.6,708.7,710.5,724.4,710.4C740.3,710.3,772.2,711.2,788.1,712.2C803.9,713.2,835.4,718.4,851.1,718.5C866.8,718.6,898.3,712.0,914.0,713.3C929.8,714.6,961.2,729.0,977.0,728.9C1008.8,728.7,1072.2,713.7,1104.0,712.2C1185.4,708.5,1348.2,706.7,1429.6,708.1C1440.1,708.3,1461.0,713.7,1471.5,718.5C1472.3,718.9,1474.0,726.3,1474.8,728.9" fill="none" stroke="#008000" stroke-width="3.500"/><g fill="#f9a3b9" stroke="#fff" stroke-width="1"><circle cx="530" cy="758.9" r="4.600"/><circle cx="598.9" cy="749.6" r="4.600"/><circle cx="661.5" cy="754.8" r="4.600"/><circle cx="724.4" cy="748.5" r="4.600"/><circle cx="788.1" cy="751.5" r="4.600"/><circle cx="851.1" cy="770.4" r="4.600"/><circle cx="914" cy="764.4" r="4.600"/><circle cx="977" cy="770.4" r="4.600"/><circle cx="1104" cy="752.6" r="4.600"/><circle cx="1429.6" cy="787.8" r="4.600"/><circle cx="1471.5" cy="780.7" r="4.600"/><circle cx="1474.8" cy="770.4" r="8"/></g><g fill="#008000" stroke="#fff" stroke-width="1"><circle cx="530" cy="715.6" r="4.600"/><circle cx="598.9" cy="708.1" r="4.600"/><circle cx="661.5" cy="713.3" r="4.600"/><circle cx="724.4" cy="710.4" r="4.600"/><circle cx="788.1" cy="712.2" r="4.600"/><circle cx="851.1" cy="718.5" r="4.600"/><circle cx="914" cy="713.3" r="4.600"/><circle cx="977" cy="728.9" r="4.600"/><circle cx="1104" cy="712.2" r="4.600"/><circle cx="1429.6" cy="708.1" r="4.600"/><circle cx="1471.5" cy="718.5" r="4.600"/><circle cx="1474.500" cy="739" r="4.600"/><circle cx="1474.800" cy="728.900" r="8"/></g><path d="M542.6,1010.0C559.5,1010.4,593.5,1011.9,610.4,1011.5C626.0,1011.1,657.0,1007.4,672.6,1007.0C688.1,1006.6,719.2,1009.0,734.8,1008.5C750.3,1008.0,781.5,1001.8,797.0,1002.6C812.6,1003.4,843.7,1014.4,859.3,1014.8C874.8,1015.2,906.0,1007.5,921.5,1005.6C937.0,1003.7,968.2,999.5,983.7,999.3C1014.9,998.8,1077.3,1005.0,1108.5,1002.6C1166.2,998.1,1281.6,981.7,1339.3,971.5C1362.0,967.5,1407.3,934.8,1430.0,945.9C1441.2,951.4,1463.6,1014.8,1474.8,1037.8" fill="none" stroke="#0b62a4" stroke-width="3.500"/><path d="M1474.600 1037.500Q1471 1043 1466.500 1048" fill="none" stroke="#0b62a4" stroke-width="3.500"/><g fill="#0b62a4" stroke="#fff" stroke-width="1"><circle cx="542.6" cy="1010" r="4.600"/><circle cx="610.4" cy="1011.5" r="4.600"/><circle cx="672.6" cy="1007" r="4.600"/><circle cx="734.8" cy="1008.5" r="4.600"/><circle cx="797" cy="1002.6" r="4.600"/><circle cx="859.3" cy="1014.8" r="4.600"/><circle cx="921.5" cy="1005.6" r="4.600"/><circle cx="983.7" cy="999.3" r="4.600"/><circle cx="1108.5" cy="1002.6" r="4.600"/><circle cx="1339.3" cy="971.5" r="4.600"/><circle cx="1430" cy="945.9" r="4.600"/><circle cx="1474.800" cy="1037.800" r="8"/></g></g></svg>
  <div class="a" style="left:1210px;top:626px;width:97px;height:75px;border:3px solid rgba(228,228,228,.85);border-radius:11px;background:rgba(255,255,255,.82);text-align:center;font-size:14.500px;line-height:17.500px;padding-top:10.500px;white-space:nowrap"><div class="b" style="color:#505050;font-size:15px">2018-12-20</div><div style="color:#008000">BPS: 120</div><div style="color:#f9a3b9">BPD: 80</div></div>
  <div class="a" style="left:1198px;top:850.500px;width:109px;height:59px;border:3px solid rgba(228,228,228,.85);border-radius:11px;background:rgba(255,255,255,.82);text-align:center;font-size:14.500px;line-height:18px;padding-top:9.500px;white-space:nowrap"><div class="b" style="color:#505050;font-size:15px">2018-12-20</div><div style="color:#0b62a4">weight: 99.21</div></div>
<!--MAIN2-->
</div>
<!--MAIN-->
<!-- ===== right column ===== -->
<div class="a" style="left:1902px;top:116px;width:3px;height:934px;background:#fff"></div>
<div class="a" style="left:1905px;top:116px;width:15px;height:934px;background:#e1e1e1"></div>
<div class="a" style="left:1905px;top:116px;width:15px;height:651px;background:#d0d1d3"></div>
<div id="right" class="a" style="width:382px">
  <div class="a" style="left:0;top:0;width:1px;height:934px;background:#fff"></div>
  <div class="card" style="top:20.0px;height:86.8px"></div>
  <span class="t b g" style="left:13.0px;top:30.5px;font-size:14px;letter-spacing:-0.3px">Lab</span>
  <span class="t b nv" style="left:16.0px;top:56.0px;font-size:15px">9</span><span class="t lg" style="left:30.5px;top:56.0px;font-size:15px;letter-spacing:-0.1px">Results To Be Reviewed : ( 9 - Internal Lab )</span>
  <div class="a" style="left:13px;top:73.0px;width:358px;height:24.0px;background:#e9eef2"></div>
  <span class="t b nv" style="left:16.0px;top:80.0px;font-size:15px">12</span><span class="t lg" style="left:39.4px;top:80.0px;font-size:15px;letter-spacing:-0.14px">Pending Orders : ( 7 - Test Lab , 5 - Internal Lab)</span>
  <div class="card" style="top:114.0px;height:179.7px"></div>
  <span class="t b g" style="left:13.0px;top:119.5px;font-size:14px;letter-spacing:0.07px">Prior Authorization Details</span>
  <div class="eb" style="left:341px;top:118px;width:34px;height:26px"></div><svg style="left:346px;top:122px" width="19" height="17" viewBox="0 0 22 19"><path d="M13 3.500H4.500a3 3 0 0 0-3 3v8a3 3 0 0 0 3 3h8.500a3 3 0 0 0 3-3V12" fill="none" stroke="#003366" stroke-width="1.700"/><path d="M8.500 13.500l1-3.500 8-8a1.400 1.400 0 0 1 2 0l.9.900a1.400 1.400 0 0 1 0 2l-8 8z" fill="#003366"/></svg>
  <div class="a" style="left:16px;top:150.5px;width:15px;height:15px;border-radius:8px;background:#e8333c"></div>
  <span class="t b nv" style="left:37.5px;top:150.0px;font-size:15px;letter-spacing:0.1px">04955554</span><span class="t " style="left:110.0px;top:150.0px;font-size:15px;letter-spacing:-0.03px">(Cognitive Behavioral Therapy)</span>
  <span class="t " style="left:20.0px;top:176.5px;font-size:14px;letter-spacing:-0.36px">97532:CPT4</span><span class="t g" style="left:102.0px;top:173.4px;font-size:15px;letter-spacing:-0.39px;font-style:italic">(Indv)</span><span class="t " style="right:11.0px;top:173.4px;font-size:15px;letter-spacing:0.8px;color:#333"><i class="lg" style="letter-spacing:0">Visits : </i>0/2</span>
  <div class="a" style="left:20px;top:189px;width:351px;height:1px;background:#dfe5ec"></div>
  <div class="a" style="left:16px;top:215.5px;width:15px;height:15px;border-radius:8px;background:#ffa400"></div>
  <span class="t b nv" style="left:37.5px;top:215.0px;font-size:15px;letter-spacing:0.1px">04949848</span><span class="t " style="left:110.0px;top:215.0px;font-size:15px;letter-spacing:0.02px">(Occupational Therapy)</span>
  <span class="t " style="left:20.0px;top:241.5px;font-size:14px;letter-spacing:-0.5px">4018F:CPT4</span><span class="t g" style="left:100.5px;top:238.4px;font-size:15px;letter-spacing:-0.39px;font-style:italic">(Indv)</span><span class="t " style="right:11.0px;top:238.4px;font-size:15px;letter-spacing:0.8px;color:#333"><i class="lg" style="letter-spacing:-.1px">Units : </i>0/40</span>
  <div class="a" style="left:20px;top:254px;width:351px;height:1px;background:#dfe5ec"></div>
  <span class="t nv" style="left:154.0px;top:269.500px;font-size:16px;letter-spacing:0.1px">View More</span>
  <div class="card" style="top:302.3px;height:172.700px"></div>
  <span class="t b g" style="left:13.0px;top:307.5px;font-size:14px">Allergies</span>
  <div class="eb" style="left:341px;top:306.5px;width:30px;height:26px"></div><svg style="left:347px;top:311px" width="19" height="17" viewBox="0 0 22 19"><path d="M13 3.500H4.500a3 3 0 0 0-3 3v8a3 3 0 0 0 3 3h8.500a3 3 0 0 0 3-3V12" fill="none" stroke="#003366" stroke-width="1.700"/><path d="M8.500 13.500l1-3.500 8-8a1.400 1.400 0 0 1 2 0l.9.900a1.400 1.400 0 0 1 0 2l-8 8z" fill="#003366"/></svg>
  <div class="a" style="left:13px;top:360.0px;width:358px;height:26.0px;background:#e9eef2"></div>
  <div class="a" style="left:13px;top:412.0px;width:358px;height:26.0px;background:#e9eef2"></div>
  <div class="a" style="left:13px;top:339.2px;width:18px;height:18px;border-radius:9px;background:#ff2a1c;box-shadow:0 0 0 .5px rgba(120,60,0,.35)"></div><span class="t b nv" style="left:39.7px;top:341.5px;font-size:15px;letter-spacing:-0.58px">Gluten</span>
  <div class="a" style="left:13px;top:366.0px;width:18px;height:18px;border-radius:9px;background:linear-gradient(90deg,#ff9124 0,#ff9124 50%,#ff2a1c 50%,#ff2a1c 100%);box-shadow:0 0 0 .5px rgba(120,60,0,.35)"></div><span class="t b nv" style="left:39.7px;top:368.5px;font-size:15px;letter-spacing:-0.45px">Dust (Not Checked)</span>
  <div class="a" style="left:13px;top:392.0px;width:18px;height:18px;border-radius:9px;background:linear-gradient(90deg,#ff9124 0,#ff9124 50%,#ff2a1c 50%,#ff2a1c 100%);box-shadow:0 0 0 .5px rgba(120,60,0,.35)"></div><span class="t b nv" style="left:39.7px;top:394.5px;font-size:15px;letter-spacing:-0.53px">codeine</span><span class="t lg" style="left:102.0px;top:394.5px;font-size:15px;letter-spacing:0.04px">( Itching, Dizziness )</span>
  <div class="a" style="left:13px;top:418.3px;width:18px;height:18px;border-radius:9px;background:linear-gradient(90deg,#ff9124 0,#ff9124 50%,#ff2a1c 50%,#ff2a1c 100%);box-shadow:0 0 0 .5px rgba(120,60,0,.35)"></div><span class="t b nv" style="left:39.7px;top:420.5px;font-size:15px;letter-spacing:-0.4px">penicillin</span><span class="t lg" style="left:110.3px;top:420.5px;font-size:15px;letter-spacing:0.04px">( Breathing Problems )</span>
  <div class="a" style="left:13px;top:444.2px;width:18px;height:18px;border-radius:9px;background:#ff9124;box-shadow:0 0 0 .5px rgba(120,60,0,.35)"></div><span class="t b nv" style="left:39.7px;top:446.5px;font-size:15px;letter-spacing:-0.44px">Latex</span>
  <div class="card" style="top:482.0px;height:84.8px"></div>
  <div class="a" style="left:13.5px;top:486.5px;width:13px;height:13px;border:1px solid #a9a9a9;border-radius:2px;background:#f4f4f4"></div>
  <span class="t b g" style="left:28.6px;top:490.0px;font-size:15px;letter-spacing:-0.35px">Next Clinical Visits</span>
  <div class="eb" style="left:342px;top:486px;width:29px;height:26px"></div>
  <svg style="left:347px;top:491px" width="19" height="17" viewBox="0 0 20 18"><path d="M4.500 7V1.500h8l3 3V7" fill="none" stroke="#003366" stroke-width="2"/><rect x="0.500" y="7" width="19" height="7" rx="1.500" fill="#003366"/><rect x="4.500" y="11.500" width="11" height="5.500" fill="#fff" stroke="#003366" stroke-width="2"/></svg>
  <div class="a" style="left:13px;top:513.4px;width:358px;height:43.1px;background:#e9eef2"></div>
  <div class="a" style="left:13.5px;top:527px;width:13px;height:13px;border:1px solid #a9a9a9;border-radius:2px;background:#f4f4f4"></div>
  <span class="t b nv" style="left:32.8px;top:527.5px;font-size:16px">2</span><span class="t " style="left:44.5px;top:527.5px;font-size:16px;color:#ff9d0a">D</span>
  <span class="t lg" style="left:157.0px;top:520.0px;font-size:15px;letter-spacing:-0.06px">Wednesday January 2,2019</span><span class="t lg" style="left:153.6px;top:540.0px;font-size:15px;letter-spacing:-0.17px">1:00 pm</span>
  <div class="card" style="top:574.7px;height:120.3px"></div>
  <span class="t b g" style="left:12.6px;top:584.5px;font-size:14px;letter-spacing:0.13px">Past Visits</span>
  <span class="t " style="left:343.0px;top:606.2px;font-size:12.5px;color:#222">2018</span>
  <div class="a" style="left:13px;top:619.0px;width:358px;height:24.7px;background:#e9eef2"></div>
  <span class="t b nv" style="left:16.0px;top:626.8px;font-size:15px;letter-spacing:-0.57px">December</span>
  <span class="t lg" style="left:105.8px;top:628.3px;font-size:16px;letter-spacing:-0.9px">20</span><span class="t lg" style="left:135.5px;top:628.3px;font-size:16px;letter-spacing:-0.9px">19</span><span class="t lg" style="left:165.3px;top:628.3px;font-size:16px;letter-spacing:-0.9px">18</span><span class="t lg" style="left:195.0px;top:628.3px;font-size:16px;letter-spacing:-0.9px">14</span><span class="t lg" style="left:224.8px;top:628.3px;font-size:16px;letter-spacing:-0.9px">13</span><span class="t lg" style="left:254.5px;top:628.3px;font-size:16px;letter-spacing:-0.9px">12</span><span class="t lg" style="left:284.2px;top:628.3px;font-size:16px;letter-spacing:-0.9px">11</span><span class="t lg" style="left:314.0px;top:628.3px;font-size:16px;letter-spacing:-0.9px">10</span><span class="t lg" style="left:343.7px;top:628.3px;font-size:16px;letter-spacing:-0.9px">07</span>
  <span class="t lg" style="left:105.8px;top:651.5px;font-size:16px;letter-spacing:-0.9px">06</span><span class="t lg" style="left:135.5px;top:651.5px;font-size:16px;letter-spacing:-0.9px">05</span><span class="t lg" style="left:165.3px;top:651.5px;font-size:16px;letter-spacing:-0.9px">03</span><span class="t lg" style="left:195.0px;top:651.5px;font-size:16px;letter-spacing:-0.9px">02</span>
  <span class="t b nv" style="left:166.0px;top:671.0px;font-size:15px;letter-spacing:-0.35px">more ...</span>
  <div class="card" style="top:702.9px;height:89.5px"></div>
  <span class="t b g" style="left:12.6px;top:708.5px;font-size:14px;letter-spacing:0.08px">Current Medication</span>
  <div class="eb" style="left:341px;top:707.6px;width:30px;height:25px"></div><svg style="left:347px;top:711.5px" width="19" height="17" viewBox="0 0 22 19"><path d="M13 3.500H4.500a3 3 0 0 0-3 3v8a3 3 0 0 0 3 3h8.500a3 3 0 0 0 3-3V12" fill="none" stroke="#003366" stroke-width="1.700"/><path d="M8.500 13.500l1-3.500 8-8a1.400 1.400 0 0 1 2 0l.9.900a1.400 1.400 0 0 1 0 2l-8 8z" fill="#003366"/></svg>
  <div class="a" style="left:13px;top:734.0px;width:358px;height:24.1px;background:#e5e5bd"></div>
  <div class="a" style="left:13px;top:759.5px;width:358px;height:23.2px;background:#e9eef2"></div>
  <span class="t b" style="left:16.0px;top:740.8px;font-size:15px;letter-spacing:-0.5px;color:#0a1a33">Concerta 18 mg</span><span class="t " style="left:131.8px;top:740.8px;font-size:15px;letter-spacing:-0.06px;color:#222">1 Unassigned</span>
  <span class="t b nv" style="left:16.0px;top:765.8px;font-size:15px;letter-spacing:-0.64px">Xanax</span><span class="t b" style="left:60.6px;top:765.8px;font-size:15px;letter-spacing:-0.26px;color:#999">0.5 mg</span><span class="t lg" style="left:117.3px;top:765.8px;font-size:15px;letter-spacing:-0.08px">1 tablet by mouth DAILY</span>
  <div class="card" style="top:800.4px;height:143.6px"></div>
  <span class="t b g" style="left:12.6px;top:810.3px;font-size:14px;letter-spacing:0.06px">Billing Info</span>
  <div class="a" style="left:13px;top:828.9px;width:358px;height:20.9px;background:#e9eef2"></div>
  <div class="a" style="left:13px;top:875.8px;width:358px;height:23.8px;background:#e9eef2"></div>
  <span class="t b nv" style="left:16.0px;top:833.4px;font-size:15px;letter-spacing:-0.46px">In Collection</span>
  <span class="t lg" style="left:16.0px;top:854.8px;font-size:15px;letter-spacing:0.39px">244&nbsp; (08/22/2018)</span><span class="t " style="right:11.0px;top:854.8px;font-size:15px;color:#ff1a1a">$25.00</span>
  <span class="t b nv" style="left:16.0px;top:882.5px;font-size:15px;letter-spacing:-0.64px">Balance Due</span><span class="t lg" style="right:14.5px;top:882.5px;font-size:15px">$5468.48</span>
  <span class="t lg" style="left:16.0px;top:904.6px;font-size:15px;letter-spacing:0.09px">From Patient</span><span class="t " style="right:11.0px;top:904.6px;font-size:15px;letter-spacing:0.1px;color:#ff1a1a">$-490.00</span>
  <span class="t lg" style="left:16.0px;top:924.3px;font-size:15px">From Insurance</span><span class="t " style="right:11.0px;top:924.3px;font-size:15px;color:#ff9d0a">$5958.48</span>
</div>
<div class="a" style="left:1884px;top:217px;width:21px;height:56px;overflow:hidden"><div class="a" style="left:0;top:0;width:56px;height:56px;border-radius:28px;background:#003366"></div></div>
<svg style="left:1893px;top:239px" width="9" height="13" viewBox="0 0 9 13"><path d="M1.500 1l5.500 5.500L1.500 12" fill="none" stroke="#fff" stroke-width="1.800"/></svg>
<!--RIGHT-->
<!-- ===== bottom bar ===== -->
<div class="a" style="left:0;top:1047px;width:1920px;height:2px;background:#fff"></div>
<div id="foot" class="a">
  <div class="tab" style="left:445px;width:93px;letter-spacing:-.4px">Screen 5</div>
  <div class="tab" style="left:355px;width:91px;letter-spacing:-.4px">Screen 4</div>
  <div class="tab" style="left:262px;width:94px;letter-spacing:-.4px">Screen 3</div>
  <div class="tab" style="left:172px;width:91px;letter-spacing:-.4px">Screen 2</div>
  <div class="tab b" style="left:80px;width:93px;background:#003366;color:#fff;border-radius:0 0 10px 7px;letter-spacing:-.75px;box-shadow:none">Screen 1</div>
  <div class="tab" style="left:38px;width:44px"></div>
  <div class="tab" style="left:0;width:38px"></div>
  <svg style="left:10px;top:5px" width="19" height="16" viewBox="0 0 19 16"><path d="M9.500 0.500L0.500 8h2.500v7.500h4.500v-5h4v5h4.500V8h2.500L15 4.700V1.500h-2v1.600z" fill="#7d7d7d"/></svg>
  <div class="a" style="left:50px;top:9px;width:18px;height:6px;border-radius:1px;background:#8a8a8a"></div><div class="a" style="left:50px;top:17px;width:18px;height:6px;border-radius:1px;background:#8a8a8a"></div>
  <span class="t" style="left:1273px;top:7px;font-size:15px;color:#6f6f6f">Copyright © 2018 Powered by zhhealthcare | User Agreement</span>
  <svg style="left:1688px;top:5px" width="29" height="22" viewBox="0 0 29 22"><g fill="#a3a3a3"><path d="M28.600 0.300C19 -1 9 2 6 10.300 11 7.500 17 7.200 22.500 6.800 25.500 5 27.600 2.500 28.600 0.300z"/><path d="M25 5.500L19 6.500 4.500 16.500 10.500 15.500z"/><path d="M0 21.700C9 23 20 20 23 11.600 18 14.600 12 14.800 6.500 15.200 3.500 17 1.200 19.500 0 21.700z"/></g></svg>
  <span class="t" style="left:1717px;top:8.500px;font-size:16px;color:#a0a0a0;letter-spacing:-.2px;transform:scaleX(.9);transform-origin:0 0" id="zh">ZHHealthcare</span>
  <div class="a" style="left:1809px;top:0;width:80px;height:28px;background:#fff;border-radius:0 0 0 12px"></div>
  <div class="a" style="left:1884px;top:0;width:36px;height:28px;background:#003366;border-radius:0 0 0 10px"></div>
  <svg style="left:1819px;top:10px" width="18" height="16" viewBox="0 0 18 16"><path d="M9 0.500c4.700 0 8.500 2.700 8.500 6s-3.800 6-8.500 6c-.9 0-1.800-.1-2.600-.3C5 13.800 3.300 15 1.500 15.300c.9-1 1.600-2.200 1.700-3.700C1.500 10.500.5 8.600.5 6.500c0-3.300 3.800-6 8.500-6z" fill="#7f7f7f"/><circle cx="5.500" cy="6.500" r="1.100" fill="#fff"/><circle cx="9" cy="6.500" r="1.100" fill="#fff"/><circle cx="12.500" cy="6.500" r="1.100" fill="#fff"/></svg>
  <svg style="left:1856px;top:10px" width="19" height="14" viewBox="0 0 19 14"><rect width="19" height="14" rx="1.500" fill="#7f7f7f"/><path d="M0.500 2.500l9 7 9-7" fill="none" stroke="#fff" stroke-width="1.800"/></svg>
  <svg style="left:1893px;top:8px" width="18" height="17" viewBox="0 0 18 17"><path d="M5.500 4a3.500 3.500 0 0 1 7 0z" fill="#fff"/><path d="M4.500 5.500h9v6a4.500 4.500 0 0 1-9 0z" fill="#fff"/><path d="M4.500 7L1 4.500M13.500 7L17 4.500M4.500 9.500H0.500M13.500 9.500h4M5 12.500L1.500 15.500M13 12.500l3.500 3" stroke="#fff" stroke-width="1.800" fill="none"/><path d="M9 7.500v7" stroke="#003366" stroke-width="1.300"/></svg>
</div>
<div class="a" style="left:0;top:1078px;width:1920px;height:2px;background:#111"></div>
<div class="a" style="left:60px;top:1078px;width:430px;height:2px;background:#e4e4e4"></div>
<!--FOOT-->
</body>
</html>
